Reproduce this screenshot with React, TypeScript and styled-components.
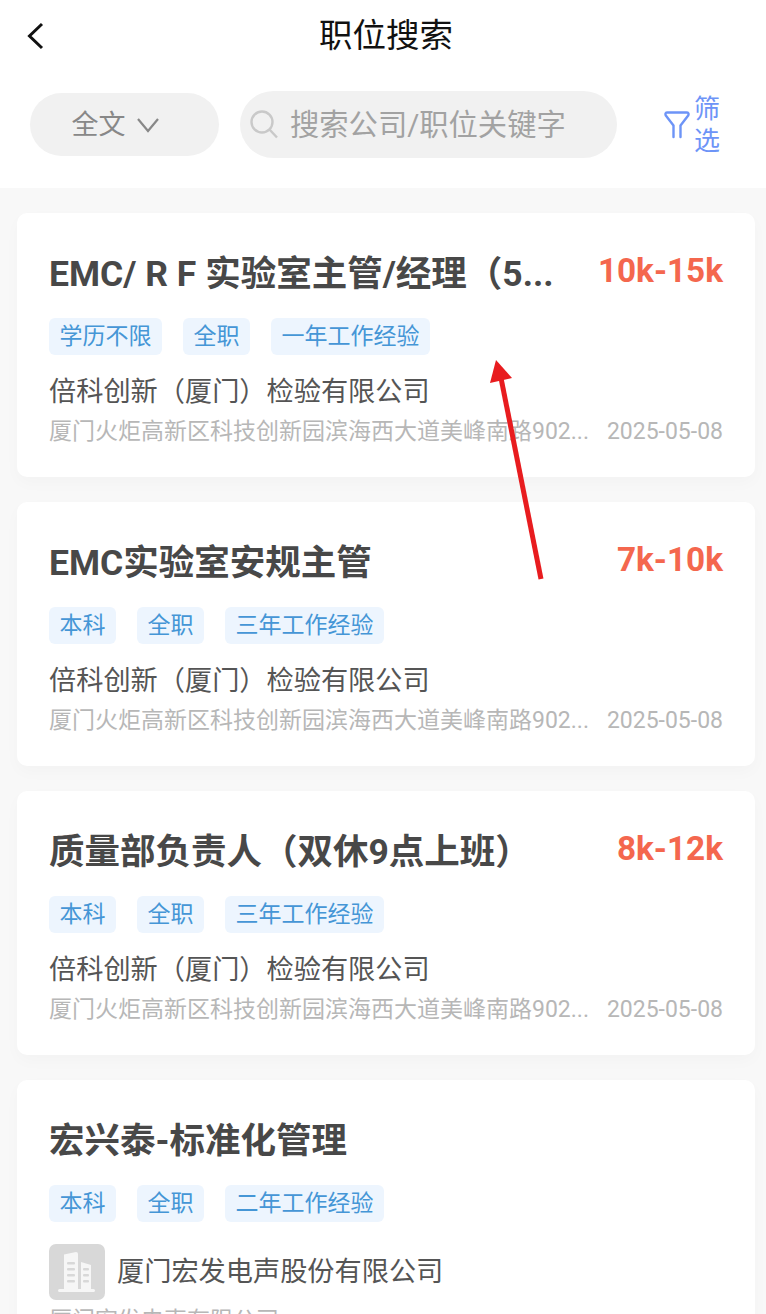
import React from 'react'
import styled, { createGlobalStyle } from 'styled-components'

const GlobalStyle = createGlobalStyle`
  html, body {
    margin: 0;
    padding: 0;
    height: 100%;
    overflow: hidden;
    background: #f8f8f8;
    font-family: Roboto, "Noto Sans CJK SC", sans-serif;
  }
`

const Page = styled.div`
  position: relative;
  width: 766px;
  height: 1314px;
  overflow: hidden;
  background: #f8f8f8;
`

const Top = styled.div`
  height: 188px;
  box-sizing: border-box;
  background: #fff;
`

const NavBar = styled.div`
  position: relative;
  height: 71px;
  padding-left: 6px;
  display: flex;
  align-items: center;
  justify-content: center;
`

const BackIcon = styled.svg`
  position: absolute;
  left: 26px;
  top: 22px;
`

const NavTitle = styled.div`
  font-size: 33.5px;
  line-height: 71px;
  color: #111;
`

const SearchRow = styled.div`
  display: flex;
  align-items: center;
  padding: 20px 0 0 30px;
`

const TypeSelect = styled.div`
  width: 189px;
  height: 63px;
  box-sizing: border-box;
  padding: 0 18px 5px 0;
  border-radius: 32px;
  background: #f1f1f1;
  display: flex;
  align-items: center;
  justify-content: center;
  gap: 10px;
  color: #888;
  font-size: 27px;
`

const ChevronIcon = styled.svg`
  margin-top: 5px;
`

const SearchBox = styled.div`
  width: 377px;
  height: 67px;
  margin-left: 21px;
  border-radius: 34px;
  background: #f1f1f1;
  display: flex;
  align-items: center;
  padding: 0 0 5px 10px;
  box-sizing: border-box;
  gap: 10px;
  color: #a2a2a2;
  font-size: 29.3px;
  white-space: nowrap;
`

const SearchIcon = styled.svg`
  margin-top: 5px;
`

const FilterBtn = styled.div`
  margin-left: 47px;
  display: flex;
  align-items: center;
  color: #6d94f7;
  gap: 4px;
`

const FilterText = styled.div`
  width: 26px;
  font-size: 26px;
  line-height: 32px;
`

const List = styled.div`
  display: flex;
  flex-direction: column;
  gap: 25px;
  padding: 25px 11px 0 17px;
`

const Card = styled.div`
  height: 264px;
  flex-shrink: 0;
  box-sizing: border-box;
  padding: 36px 32px 0;
  background: #fff;
  border-radius: 10px;
  box-shadow: 0 6px 16px rgba(0, 0, 0, 0.025);
`

const TitleRow = styled.div`
  display: flex;
  justify-content: space-between;
  align-items: flex-start;
  height: 46px;
`

const Title = styled.div`
  font-size: 35.5px;
  line-height: 50px;
  font-weight: 700;
  color: #484848;
  white-space: nowrap;
`

const Salary = styled.div`
  font-size: 33.3px;
  line-height: 44px;
  font-weight: 700;
  color: #f4674e;
  white-space: nowrap;
`

const Tags = styled.div`
  display: flex;
  gap: 21px;
  margin-top: 23px;
`

const Tag = styled.div`
  height: 37px;
  padding: 0 10.5px;
  border-radius: 6px;
  background: #edf5fe;
  color: #4596d6;
  font-size: 23px;
  line-height: 37px;
`

const Company = styled.div<{ $withLogo?: boolean }>`
  display: flex;
  align-items: center;
  gap: 12px;
  margin: ${({ $withLogo }) => ($withLogo ? '22px 0 2px' : '17px 0 0')};
  font-size: 27.2px;
  line-height: 40px;
  color: #555;
`

const CompanyLogo = styled.div`
  width: 56px;
  height: 56px;
  border-radius: 7px;
  background: #d8d8d8;
  display: flex;
  align-items: center;
  justify-content: center;
`

const MetaRow = styled.div`
  display: flex;
  justify-content: space-between;
  align-items: center;
  margin-top: 1px;
  font-size: 23px;
  line-height: 38px;
  color: #b7b7b7;
  white-space: nowrap;
`

const ArrowOverlay = styled.svg`
  position: absolute;
  left: 0;
  top: 0;
  pointer-events: none;
`

type Job = {
  title: string
  salary?: string
  tags: string[]
  company: string
  address: string
  date?: string
  logo?: boolean
}

const ADDRESS = '厦门火炬高新区科技创新园滨海西大道美峰南路902...'

const JOBS: Job[] = [
  {
    title: 'EMC/ R F 实验室主管/经理（5...',
    salary: '10k-15k',
    tags: ['学历不限', '全职', '一年工作经验'],
    company: '倍科创新（厦门）检验有限公司',
    address: ADDRESS,
    date: '2025-05-08',
  },
  {
    title: 'EMC实验室安规主管',
    salary: '7k-10k',
    tags: ['本科', '全职', '三年工作经验'],
    company: '倍科创新（厦门）检验有限公司',
    address: ADDRESS,
    date: '2025-05-08',
  },
  {
    title: '质量部负责人（双休9点上班）',
    salary: '8k-12k',
    tags: ['本科', '全职', '三年工作经验'],
    company: '倍科创新（厦门）检验有限公司',
    address: ADDRESS,
    date: '2025-05-08',
  },
  {
    title: '宏兴泰-标准化管理',
    tags: ['本科', '全职', '二年工作经验'],
    company: '厦门宏发电声股份有限公司',
    address: '厦门宏发电声有限公司',
    logo: true,
  },
]

function BuildingIcon() {
  return (
    <svg width="38" height="42" viewBox="0 0 38 42" fill="#f6f6f6">
      <path d="M6 3.5 L18 1 Q20 1 20 3 V38 H6 Z" />
      <path d="M23 11 L33 14 V38 H23 Z" />
      <rect x="0" y="38" width="37" height="3" rx="1.5" />
      {[11, 17, 23, 29].map((y) => (
        <rect key={y} x="9" y={y} width="8" height="2.5" rx="1" fill="#d8d8d8" />
      ))}
      {[17, 23, 29].map((y) => (
        <rect key={y} x="25" y={y} width="6" height="2.5" rx="1" fill="#d8d8d8" />
      ))}
    </svg>
  )
}

function App() {
  return (
    <Page>
      <GlobalStyle />
      <Top>
        <NavBar>
          <BackIcon width="20" height="28" viewBox="0 0 20 28" fill="none">
            <path d="M16 2 L3.5 14 L16 26" stroke="#111" strokeWidth="3" />
          </BackIcon>
          <NavTitle>职位搜索</NavTitle>
        </NavBar>
        <SearchRow>
          <TypeSelect>
            全文
            <ChevronIcon width="24" height="16" viewBox="0 0 24 16" fill="none">
              <path d="M2 2 L12 14 L22 2" stroke="#888" strokeWidth="2.2" />
            </ChevronIcon>
          </TypeSelect>
          <SearchBox>
            <SearchIcon width="30" height="30" viewBox="0 0 30 30" fill="none" stroke="#c9c9c9" strokeWidth="2.4">
              <circle cx="12" cy="12" r="10.5" />
              <path d="M19.5 19.5 L27 27.5" />
            </SearchIcon>
            搜索公司/职位关键字
          </SearchBox>
          <FilterBtn>
            <svg width="26" height="28" viewBox="0 0 26 28" fill="none" stroke="#6d94f7" strokeWidth="2.4">
              <path
                d="M9.5 26 V14.5 L1.8 4.5 Q0.6 1.5 3.5 1.5 H22.5 Q25.4 1.5 24.2 4.5 L16.5 14.5 V26"
                strokeLinejoin="round"
                strokeLinecap="round"
              />
            </svg>
            <FilterText>筛选</FilterText>
          </FilterBtn>
        </SearchRow>
      </Top>
      <List>
        {JOBS.map((job) => (
          <Card key={job.title}>
            <TitleRow>
              <Title>{job.title}</Title>
              {job.salary && <Salary>{job.salary}</Salary>}
            </TitleRow>
            <Tags>
              {job.tags.map((tag) => (
                <Tag key={tag}>{tag}</Tag>
              ))}
            </Tags>
            <Company $withLogo={job.logo}>
              {job.logo && (
                <CompanyLogo>
                  <BuildingIcon />
                </CompanyLogo>
              )}
              {job.company}
            </Company>
            <MetaRow>
              <span>{job.address}</span>
              {job.date && <span>{job.date}</span>}
            </MetaRow>
          </Card>
        ))}
      </List>
      <ArrowOverlay width="766" height="1314" viewBox="0 0 766 1314">
        <path d="M541 579 L501 378" stroke="#e81c1f" strokeWidth="5" fill="none" />
        <path d="M496 360 L512 378 L490 383 Z" fill="#e81c1f" />
      </ArrowOverlay>
    </Page>
  )
}

export default App
